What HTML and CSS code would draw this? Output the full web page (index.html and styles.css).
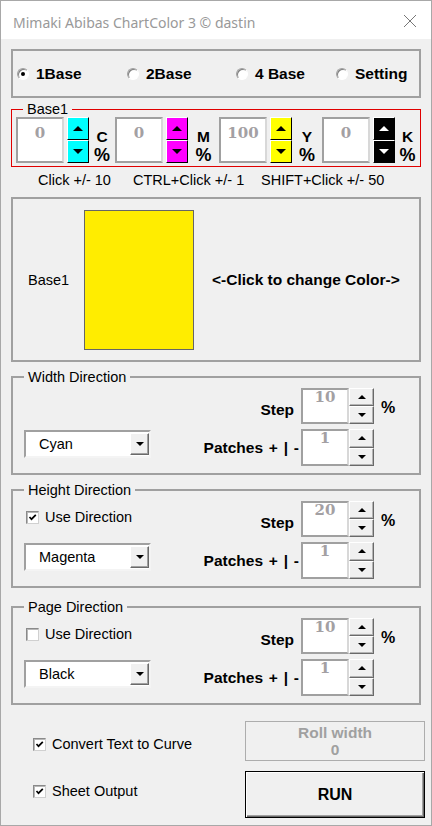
FILE: index.html
```html
<!DOCTYPE html>
<html lang="en">
<head>
<meta charset="utf-8">
<title>Mimaki Abibas ChartColor 3</title>
<link rel="stylesheet" href="styles.css">
</head>
<body>
<div class="window">
  <div class="titlebar">
    <span class="title">Mimaki Abibas ChartColor 3 © dastin</span>
    <svg class="close" width="14" height="14" viewBox="0 0 14 14"><path d="M1 1 L13 13 M13 1 L1 13" stroke="#777" stroke-width="1" fill="none"/></svg>
  </div>
  <div class="content">
    <div class="frame radios">
      <label class="radio"><span class="rb on"></span>1Base</label>
      <label class="radio"><span class="rb"></span>2Base</label>
      <label class="radio"><span class="rb"></span>4 Base</label>
      <label class="radio"><span class="rb"></span>Setting</label>
    </div>

    <fieldset class="base">
      <legend>Base1</legend>
      <div class="cmyk">
        <div class="chan">
          <div class="num">0</div>
          <div class="spin spin-c"><span class="sb"><i class="up"></i></span><span class="sb"><i class="down"></i></span></div>
          <div class="chl"><b>C</b><b class="pct">%</b></div>
        </div>
        <div class="chan">
          <div class="num">0</div>
          <div class="spin spin-m"><span class="sb"><i class="up"></i></span><span class="sb"><i class="down"></i></span></div>
          <div class="chl"><b>M</b><b class="pct">%</b></div>
        </div>
        <div class="chan">
          <div class="num">100</div>
          <div class="spin spin-y"><span class="sb"><i class="up"></i></span><span class="sb"><i class="down"></i></span></div>
          <div class="chl"><b>Y</b><b class="pct">%</b></div>
        </div>
        <div class="chan">
          <div class="num">0</div>
          <div class="spin spin-k"><span class="sb"><i class="up"></i></span><span class="sb"><i class="down"></i></span></div>
          <div class="chl"><b>K</b><b class="pct">%</b></div>
        </div>
      </div>
    </fieldset>

    <div class="help">
      <span>Click +/- 10</span>
      <span>CTRL+Click +/- 1</span>
      <span>SHIFT+Click +/- 50</span>
    </div>

    <div class="frame preview">
      <span class="pv-label">Base1</span>
      <div class="swatch"></div>
      <b class="pv-hint">&lt;-Click to change Color-&gt;</b>
    </div>

    <fieldset class="dir">
      <legend>Width Direction</legend>
      <div class="dir-body">
        <div class="dir-left nochk">
          <div class="combo"><span class="combo-text">Cyan</span><span class="combo-btn"><i class="down"></i></span></div>
        </div>
        <div class="dir-right">
          <b class="lbl lbl-step">Step</b>
          <div class="field">10</div>
          <div class="spin-s"><span class="sbs"><i class="up"></i></span><span class="sbs"><i class="down"></i></span></div>
          <b class="pct-s">%</b>
          <b class="lbl lbl-patch">Patches + | -</b>
          <div class="field">1</div>
          <div class="spin-s"><span class="sbs"><i class="up"></i></span><span class="sbs"><i class="down"></i></span></div>
          <span></span>
        </div>
      </div>
    </fieldset>

    <fieldset class="dir">
      <legend>Height Direction</legend>
      <div class="dir-body">
        <div class="dir-left">
          <label class="chk-row"><span class="cb"><svg viewBox="0 0 9 9" width="9" height="9"><path d="M1.5 4 L3.5 6.2 L7.8 1.8" stroke="#000" stroke-width="1.7" fill="none"/></svg></span>Use Direction</label>
          <div class="combo"><span class="combo-text">Magenta</span><span class="combo-btn"><i class="down"></i></span></div>
        </div>
        <div class="dir-right">
          <b class="lbl lbl-step">Step</b>
          <div class="field">20</div>
          <div class="spin-s"><span class="sbs"><i class="up"></i></span><span class="sbs"><i class="down"></i></span></div>
          <b class="pct-s">%</b>
          <b class="lbl lbl-patch">Patches + | -</b>
          <div class="field">1</div>
          <div class="spin-s"><span class="sbs"><i class="up"></i></span><span class="sbs"><i class="down"></i></span></div>
          <span></span>
        </div>
      </div>
    </fieldset>

    <fieldset class="dir dir-page">
      <legend>Page Direction</legend>
      <div class="dir-body">
        <div class="dir-left">
          <label class="chk-row"><span class="cb"></span>Use Direction</label>
          <div class="combo"><span class="combo-text">Black</span><span class="combo-btn"><i class="down"></i></span></div>
        </div>
        <div class="dir-right">
          <b class="lbl lbl-step">Step</b>
          <div class="field">10</div>
          <div class="spin-s"><span class="sbs"><i class="up"></i></span><span class="sbs"><i class="down"></i></span></div>
          <b class="pct-s">%</b>
          <b class="lbl lbl-patch">Patches + | -</b>
          <div class="field">1</div>
          <div class="spin-s"><span class="sbs"><i class="up"></i></span><span class="sbs"><i class="down"></i></span></div>
          <span></span>
        </div>
      </div>
    </fieldset>

    <div class="bottom">
      <label class="chk-row bottom-chk first"><span class="cb"><svg viewBox="0 0 9 9" width="9" height="9"><path d="M1.5 4 L3.5 6.2 L7.8 1.8" stroke="#000" stroke-width="1.7" fill="none"/></svg></span>Convert Text to Curve</label>
      <div class="btn-disabled">Roll width<br>0</div>
      <label class="chk-row bottom-chk second"><span class="cb"><svg viewBox="0 0 9 9" width="9" height="9"><path d="M1.5 4 L3.5 6.2 L7.8 1.8" stroke="#000" stroke-width="1.7" fill="none"/></svg></span>Sheet Output</label>
      <div class="btn-run">RUN</div>
    </div>
  </div>
</div>
</body>
</html>
```

FILE: styles.css
```css
* { box-sizing: border-box; }
html, body { margin: 0; padding: 0; }
body {
  width: 432px;
  height: 826px;
  background: #f0f0f0;
  font-family: "Liberation Sans", Arial, sans-serif;
  font-size: 14.5px;
  color: #000;
  overflow: hidden;
}
.window {
  width: 432px;
  height: 826px;
  border: 1px solid #a8a8a8;
  background: #f0f0f0;
  display: flex;
  flex-direction: column;
}
.titlebar {
  height: 38px;
  flex: none;
  background: #fff;
  display: flex;
  align-items: center;
  justify-content: space-between;
  padding: 0 14px 0 12px;
}
.title {
  font-family: "Noto Sans", "Open Sans", sans-serif;
  font-size: 14px;
  color: #999;
  margin-top: 4px;
}
.close { display: block; margin-top: 2px; }

.content {
  padding: 10px 10px 0 10px;
  display: flex;
  flex-direction: column;
}
.frame { border: 2px solid #a0a0a0; }

/* radio row */
.radios {
  height: 49px;
  display: grid;
  grid-template-columns: 110px 109px 100px auto;
  align-items: center;
  padding-left: 4px;
}
.radio {
  display: flex;
  align-items: center;
  gap: 7px;
  font-weight: bold;
  font-size: 15.5px;
}
.rb {
  width: 12px;
  height: 12px;
  border-radius: 50%;
  background: #fff;
  border: 1px solid;
  border-color: #a0a0a0 #fff #fff #a0a0a0;
  box-shadow: inset 1px 1px 0 #808080;
  display: flex;
  align-items: center;
  justify-content: center;
}
.rb.on::after {
  content: "";
  width: 4px;
  height: 4px;
  border-radius: 50%;
  background: #000;
}

/* Base1 group */
fieldset { min-width: 0; }
.base {
  margin: 3px 0 0;
  border: 1px solid #e00000;
  padding: 0 0 3px 4px;
}
.base legend {
  margin-left: 7px;
  padding: 0 4px;
  line-height: 16px;
  font-size: 14.5px;
}
.cmyk {
  display: grid;
  grid-template-columns: 99px 104px 103px 1fr;
}
.chan { display: flex; }
.num {
  width: 48px;
  height: 46px;
  background: #fff;
  border: 2px solid;
  border-color: #a0a0a0 #d8d8d8 #a0a0a0 #a0a0a0;
  text-align: center;
  font-family: "DejaVu Serif", serif;
  font-weight: bold;
  font-size: 15px;
  line-height: 14px;
  padding-top: 7px;
  color: #a3a0a3;
}
.spin {
  width: 22px;
  margin-left: 3px;
  display: flex;
  flex-direction: column;
}
.sb {
  height: 23px;
  display: flex;
  align-items: center;
  justify-content: center;
  border: 1px solid;
  border-color: #fff #000 #000 #fff;
}
.spin-c .sb { background: #00ffff; }
.spin-m .sb { background: #ff00ff; }
.spin-y .sb { background: #ffff00; }
.spin-k .sb { background: #000; border-color: #fff #000 #000 #fff; }
.up, .down { display: block; width: 0; height: 0; }
.sb .up { border-left: 5px solid transparent; border-right: 5px solid transparent; border-bottom: 5px solid #000; }
.sb .down { border-left: 5px solid transparent; border-right: 5px solid transparent; border-top: 5px solid #000; }
.spin-k .sb .up { border-bottom-color: #fff; }
.spin-k .sb .down { border-top-color: #fff; }
.chl {
  flex: 1;
  display: flex;
  flex-direction: column;
  align-items: center;
  padding-top: 12px;
  font-size: 15.5px;
  line-height: 16px;
}
.chl .pct { font-size: 18px; margin-top: 2px; }

/* help */
.help {
  display: grid;
  grid-template-columns: 95px 128px auto;
  padding-left: 27px;
  margin-top: 4px;
  line-height: 18px;
}

/* preview */
.preview {
  margin-top: 8px;
  height: 165px;
  display: flex;
  align-items: center;
  padding-left: 15px;
}
.pv-label { width: 56px; }
.swatch {
  width: 110px;
  height: 140px;
  background: #ffed00;
  border: 1px solid #666;
}
.pv-hint { margin-left: 18px; font-size: 15.5px; }

/* direction groups */
.dir {
  margin: 7px 0 0;
  border: 2px solid #a0a0a0;
  padding: 3px 0 7px 11px;
}
.dir-page { margin-top: 11px; }
.dir legend {
  margin-left: 0;
  padding: 0 4px;
  line-height: 16px;
  font-size: 14.5px;
}
.dir-body {
  display: flex;
  justify-content: space-between;
}
.dir-left { padding-top: 9px; }
.dir-left.nochk { padding-top: 42px; }
.chk-row {
  display: flex;
  align-items: center;
  gap: 6px;
  height: 14px;
}
.dir-left .chk-row { margin: 0 0 19px 2px; }
.cb {
  width: 13px;
  height: 13px;
  background: #fff;
  border: 1px solid;
  border-color: #8a8a8a #d0d0d0 #d0d0d0 #8a8a8a;
  box-shadow: inset 1px 1px 0 #b8b8b8;
  display: flex;
  align-items: center;
  justify-content: center;
  flex: none;
}
.cb svg { display: block; }
.combo {
  width: 127px;
  height: 28px;
  background: #fff;
  border: 2px solid;
  border-color: #a0a0a0 #f4f4f4 #f4f4f4 #a0a0a0;
  display: flex;
  align-items: center;
  padding: 1px 0 1px 13px;
}
.combo-text { flex: 1; }
.combo-btn {
  width: 19px;
  height: 22px;
  background: #f0f0f0;
  border: 1px solid;
  border-color: #fff #696969 #696969 #fff;
  box-shadow: inset -1px -1px 0 #a0a0a0;
  display: flex;
  align-items: center;
  justify-content: center;
}
.combo-btn .down,
.sbs .down { border-left: 4px solid transparent; border-right: 4px solid transparent; border-top: 4px solid #000; }
.sbs .up { border-left: 4px solid transparent; border-right: 4px solid transparent; border-bottom: 4px solid #000; }

.dir-right {
  display: grid;
  grid-template-columns: auto 48px 25px 45px;
  grid-template-rows: 36px 37px;
  row-gap: 5px;
}
.lbl {
  justify-self: end;
  align-self: center;
  margin-right: 2px;
  font-size: 15.5px;
}
.lbl-patch { word-spacing: 1.5px; }
.lbl-step { margin-top: 8px; margin-right: 7px; }
.field {
  background: #fff;
  border: 2px solid;
  border-color: #a0a0a0 #d8d8d8 #a0a0a0 #a0a0a0;
  text-align: center;
  font-family: "DejaVu Serif", serif;
  font-weight: bold;
  font-size: 15px;
  line-height: 14px;
  color: #a3a0a3;
}
.spin-s {
  display: flex;
  flex-direction: column;
}
.sbs {
  flex: 1;
  display: flex;
  align-items: center;
  justify-content: center;
  background: #f0f0f0;
  border: 1px solid;
  border-color: #fff #696969 #696969 #fff;
  box-shadow: inset -1px -1px 0 #b4b4b4;
}
.pct-s {
  align-self: center;
  margin-top: 4px;
  padding-left: 7px;
  font-size: 16px;
}

/* bottom */
.bottom {
  display: grid;
  grid-template-columns: 1fr 180px;
  grid-template-rows: 40px 47px;
  row-gap: 10px;
  margin: 16px -4px 0 0;
}
.bottom-chk { padding-left: 22px; align-self: start; }
.bottom-chk.first { margin-top: 16px; }
.bottom-chk.second { margin-top: 13px; }
.btn-disabled {
  border: 1px solid #adadad;
  color: #a0a0a0;
  font-weight: bold;
  font-size: 15.5px;
  line-height: 17px;
  text-align: center;
  padding-top: 2px;
}
.btn-run {
  border: 1px solid #000;
  box-shadow: inset 1px 1px 0 #fff, inset -1px -1px 0 #696969, inset -2px -2px 0 #a0a0a0;
  display: flex;
  align-items: center;
  justify-content: center;
  font-weight: bold;
  font-size: 16px;
}
```
